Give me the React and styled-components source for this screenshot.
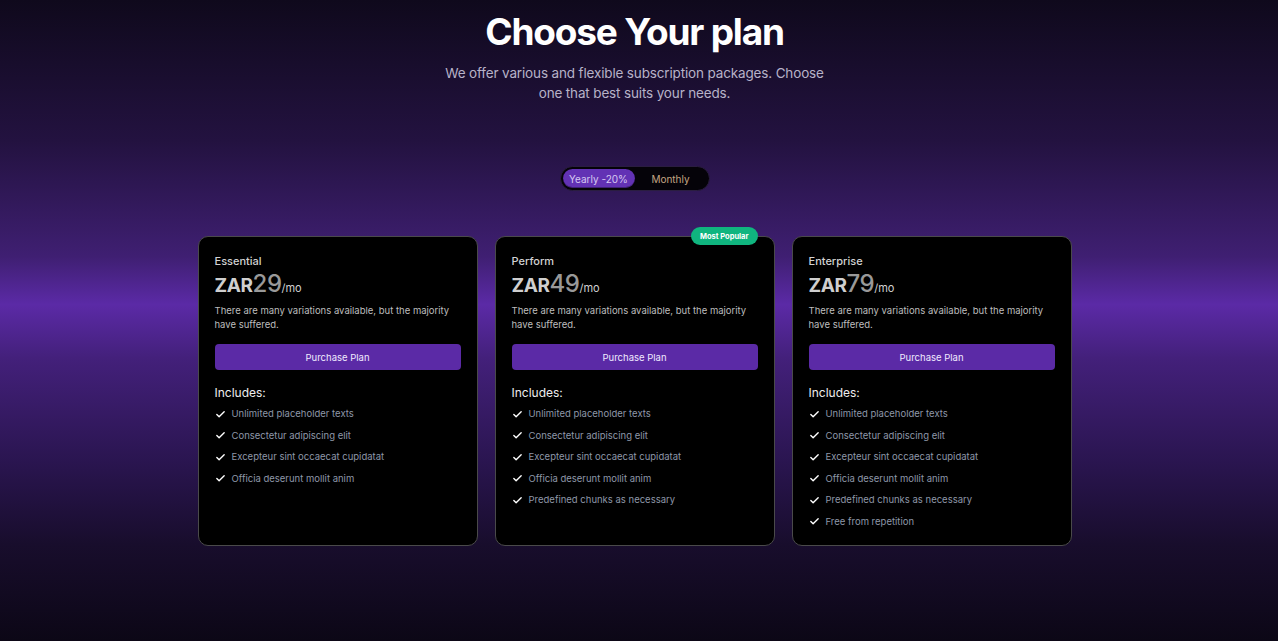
import React from 'react'
import styled, { createGlobalStyle } from 'styled-components'
import { Check } from 'lucide-react'

const GlobalStyle = createGlobalStyle`
  html, body {
    margin: 0;
    padding: 0;
  }
  body {
    font-family: Inter, "Noto Sans", sans-serif;
    background: #0c0716;
  }
  * {
    box-sizing: border-box;
  }
`

const plans = [
  {
    name: 'Essential',
    price: 29,
    features: [
      'Unlimited placeholder texts',
      'Consectetur adipiscing elit',
      'Excepteur sint occaecat cupidatat',
      'Officia deserunt mollit anim',
    ],
  },
  {
    name: 'Perform',
    price: 49,
    popular: true,
    features: [
      'Unlimited placeholder texts',
      'Consectetur adipiscing elit',
      'Excepteur sint occaecat cupidatat',
      'Officia deserunt mollit anim',
      'Predefined chunks as necessary',
    ],
  },
  {
    name: 'Enterprise',
    price: 79,
    features: [
      'Unlimited placeholder texts',
      'Consectetur adipiscing elit',
      'Excepteur sint occaecat cupidatat',
      'Officia deserunt mollit anim',
      'Predefined chunks as necessary',
      'Free from repetition',
    ],
  },
]

const App = () => (
  <Page>
    <GlobalStyle />
    <Header>
      <Title>Choose Your plan</Title>
      <Subtitle>
        We offer various and flexible subscription packages. Choose one that best suits your needs.
      </Subtitle>
    </Header>
    <Toggle>
      <ToggleOption active>Yearly -20%</ToggleOption>
      <ToggleOption>Monthly</ToggleOption>
    </Toggle>
    <Cards>
      {plans.map((plan) => (
        <Card key={plan.name}>
          {plan.popular && <Badge>Most Popular</Badge>}
          <PlanName>{plan.name}</PlanName>
          <Price>
            <Currency>ZAR</Currency>
            <Amount>{plan.price}</Amount>
            <Period>/mo</Period>
          </Price>
          <Description>There are many variations available, but the majority have suffered.</Description>
          <PurchaseButton>Purchase Plan</PurchaseButton>
          <IncludesTitle>Includes:</IncludesTitle>
          <FeatureList>
            {plan.features.map((f) => (
              <Feature key={f}>
                <Check size={11} strokeWidth={3} color="#ffffff" />
                <span>{f}</span>
              </Feature>
            ))}
          </FeatureList>
        </Card>
      ))}
    </Cards>
  </Page>
)

const Page = styled.div`
  min-height: 641px;
  display: flex;
  flex-direction: column;
  align-items: center;
  padding: 8px 9px 0 0;
  background: linear-gradient(
    180deg,
    #0f091c 0%,
    #231240 22%,
    #3f1f72 40%,
    #5b2aa6 47.5%,
    #43207a 56%,
    #2a1550 72%,
    #180d2c 85%,
    #0c0716 100%
  );
`

const Header = styled.div`
  display: flex;
  flex-direction: column;
  align-items: center;
  text-align: center;
`

const Title = styled.h1`
  margin: 0;
  font-size: 37px;
  line-height: 48px;
  font-weight: 700;
  letter-spacing: -1.2px;
  color: #ffffff;
`

const Subtitle = styled.p`
  margin: 8px 0 0;
  width: 400px;
  font-size: 13.5px;
  line-height: 19.5px;
  letter-spacing: -0.15px;
  color: #b7b2c8;
`

const Toggle = styled.div`
  margin-top: 63px;
  display: flex;
  align-items: center;
  width: 150px;
  height: 25px;
  padding: 2px;
  border-radius: 13px;
  background: #050309;
  border: 1px solid #2a1d40;
`

const ToggleOption = styled.div`
  flex: ${(p) => (p.active ? '0 0 72px' : '1')};
  height: 100%;
  display: flex;
  align-items: center;
  justify-content: center;
  border-radius: 11px;
  font-size: 10px;
  color: ${(p) => (p.active ? '#d6c8f2' : '#c4a684')};
  background: ${(p) => (p.active ? '#6232b4' : 'transparent')};
  box-shadow: ${(p) => (p.active ? 'inset 0 -1px 0 rgba(0,0,0,0.35)' : 'none')};
`

const Cards = styled.div`
  margin-top: 45px;
  display: grid;
  grid-template-columns: repeat(3, 280px);
  gap: 17px;
`

const Card = styled.div`
  position: relative;
  height: 310px;
  padding: 17px 16px 0;
  border-radius: 10px;
  border: 1px solid #4a4a4a;
  background: #000000;
  display: flex;
  flex-direction: column;
  > * {
    flex-shrink: 0;
  }
`

const Badge = styled.div`
  position: absolute;
  top: -10px;
  right: 16px;
  height: 18px;
  padding: 0 9px;
  border-radius: 9px;
  background: #10b57f;
  color: #ffffff;
  font-size: 7.5px;
  font-weight: 700;
  display: flex;
  align-items: center;
`

const PlanName = styled.div`
  font-size: 11px;
  font-weight: 500;
  color: #d2d2d2;
  line-height: 14px;
`

const Price = styled.div`
  margin-top: 2px;
  display: flex;
  align-items: baseline;
  line-height: 28px;
`

const Currency = styled.span`
  font-size: 19px;
  font-weight: 700;
  color: #cfcfcf;
  letter-spacing: -0.4px;
`

const Amount = styled.span`
  font-size: 24px;
  font-weight: 500;
  color: #999999;
  letter-spacing: -0.5px;
`

const Period = styled.span`
  font-size: 11px;
  color: #d0d0d0;
`

const Description = styled.p`
  margin: 2px 0 0;
  font-size: 9.5px;
  line-height: 14px;
  color: #bdbdbd;
`

const PurchaseButton = styled.button`
  margin-top: 12px;
  height: 26px;
  width: 100%;
  border: none;
  border-radius: 4px;
  background: #5b2aa6;
  color: #f0eaff;
  font-family: inherit;
  font-size: 9.5px;
  cursor: pointer;
`

const IncludesTitle = styled.div`
  margin-top: 16px;
  font-size: 12px;
  line-height: 14px;
  color: #eeeeee;
`

const FeatureList = styled.ul`
  list-style: none;
  margin: 7px 0 0;
  padding: 0;
  display: flex;
  flex-direction: column;
  gap: 7.5px;
`

const Feature = styled.li`
  display: flex;
  align-items: center;
  gap: 6px;
  font-size: 9.5px;
  line-height: 14px;
  color: #8e97a8;
`

export default App
